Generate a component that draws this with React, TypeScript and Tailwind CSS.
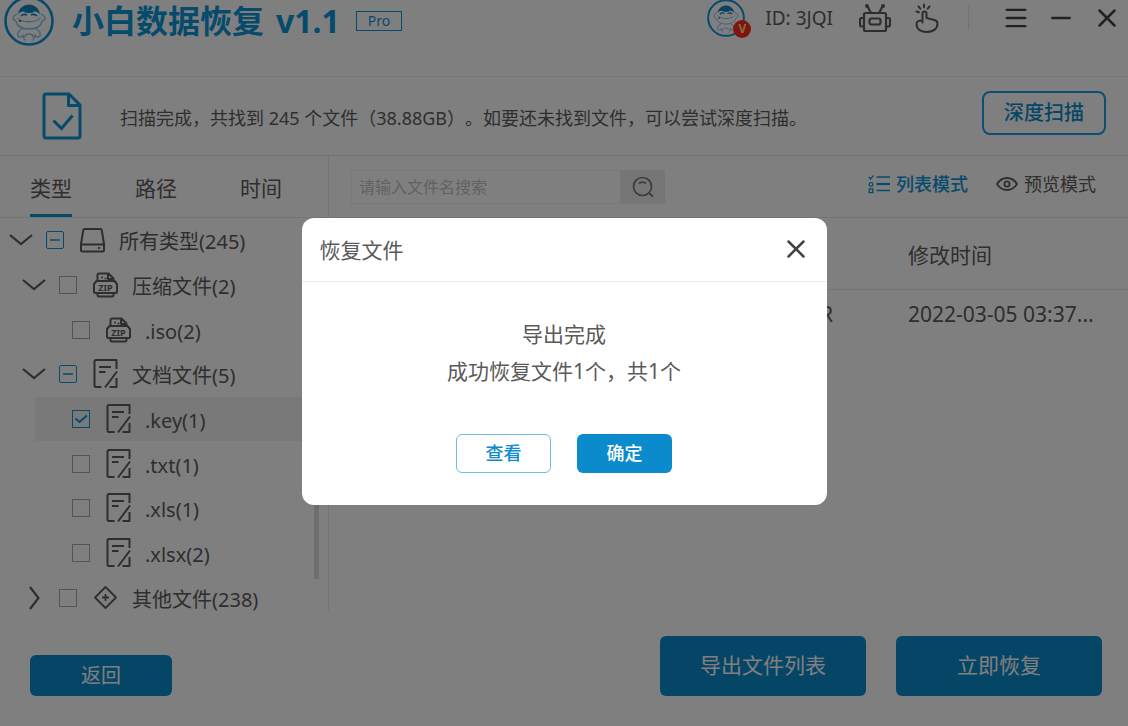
import React, { useState } from 'react';
import { Menu, Minus, X } from 'lucide-react';
import clsx from 'clsx';

type CheckState = 'none' | 'partial' | 'checked';
type IconName = 'drive' | 'zip' | 'doc' | 'other';

interface TreeNode {
    id: string;
    label: string;
    level: 0 | 1 | 2;
    icon: IconName;
    state: CheckState;
    arrow?: 'open' | 'closed';
    selected?: boolean;
}

const TREE: TreeNode[] = [
    { id: 'all', label: '所有类型(245)', level: 0, icon: 'drive', state: 'partial', arrow: 'open' },
    { id: 'archive', label: '压缩文件(2)', level: 1, icon: 'zip', state: 'none', arrow: 'open' },
    { id: 'iso', label: '.iso(2)', level: 2, icon: 'zip', state: 'none' },
    { id: 'docs', label: '文档文件(5)', level: 1, icon: 'doc', state: 'partial', arrow: 'open' },
    { id: 'key', label: '.key(1)', level: 2, icon: 'doc', state: 'checked', selected: true },
    { id: 'txt', label: '.txt(1)', level: 2, icon: 'doc', state: 'none' },
    { id: 'xls', label: '.xls(1)', level: 2, icon: 'doc', state: 'none' },
    { id: 'xlsx', label: '.xlsx(2)', level: 2, icon: 'doc', state: 'none' },
    { id: 'other', label: '其他文件(238)', level: 1, icon: 'other', state: 'none', arrow: 'closed' },
];

const TABS = ['类型', '路径', '时间'];

// Full-width punctuation is escaped so editors don't normalise it
const SCAN_SUMMARY =
    '扫描完成\uFF0C共找到 245 个文件\uFF0838.88GB\uFF09\u3002如要还未找到文件\uFF0C可以尝试深度扫描\u3002';
const RESULT_TEXT = '成功恢复文件1个\uFF0C共1个';

const INDENT = { 0: 'ml-[9px]', 1: 'ml-[22px]', 2: 'ml-[35px]' };

// Round mascot used for both the logo and the account avatar
const Mascot: React.FC<{ className: string }> = ({ className }) => (
    <svg viewBox="0 0 50 50" className={className} fill="none" aria-hidden="true">
        <circle cx="25" cy="25" r="23.5" stroke="#0c96d8" strokeWidth="2.6" />
        <g stroke="#7cc4ea" strokeWidth="1.3" strokeLinecap="round">
            <path d="M13 18c-2 1-4 3-4 4.500s2 2 3 2.500c1 5 6 8 13 8s12-3 13-8c1-.5 3-1 3-2.500S39 19 37 18" />
            <path d="M14 22c3 5 19 5 22 0" />
            <path d="M18 33c-3 1-5 4-4 7 1 2 4 1 5-1M32 33c3 1 5 4 4 7-1 2-4 1-5-1M21 41c0-4 8-4 8 0M19 39c0 3 1 4 2 5M31 39c0 3-1 4-2 5" />
        </g>
        <path d="M14 18c1-6 6-9.500 11-9.500S35 12 36 18c-2-2-4-2.500-6-2.500-1 2-9 2-10 0-2 0-4 .5-6 2.500z" fill="#0c86c8" />
        <path d="M17 20c2-2 4-2 6-1M27 19c2-1 4-1 6 1" stroke="#0c86c8" strokeWidth="1.600" />
        <circle cx="16" cy="25" r=".9" fill="#333" />
    </svg>
);

const RobotIcon = () => (
    <svg viewBox="0 0 32 30" className="h-[30px] w-8" fill="none" stroke="currentColor" strokeWidth="2.2" aria-hidden="true">
        <rect x="5" y="10" width="22" height="18" rx="1.500" />
        <rect x="10.500" y="15.500" width="11" height="6" rx="2" />
        <path d="M12 10 8.500 3.500M20 10l3.500-6.500" />
        <path d="M5 15H2.500Q1 15 1 16.500v5.500q0 1.500 1.500 1.500H5M27 15h2.500Q31 15 31 16.500v5.500q0 1.500-1.500 1.500H27" />
        <circle cx="8" cy="3" r="2" fill="currentColor" stroke="none" />
        <circle cx="24" cy="3" r="2" fill="currentColor" stroke="none" />
    </svg>
);

const TapIcon = () => (
    <svg viewBox="0 0 24 30" className="h-[30px] w-6" fill="none" stroke="currentColor" strokeWidth="2" strokeLinecap="round" strokeLinejoin="round" aria-hidden="true">
        <path d="M7.500 19.500V10.500c0-2.600 4-2.600 4 0V15l8 2c2 .5 3 1.700 3 3.500 0 5-4 8.500-10.500 8.500C5.500 29 1.500 26 1.500 21c0-2.500 2.500-4 6-3.500" />
        <path d="M9 1.500v2.700M3.500 3.500l1.800 2.200M14.500 3.500l-1.800 2.200M1.500 8.500l2.500.7" />
    </svg>
);

const ScanDoneIcon = () => (
    <svg viewBox="0 0 40 48" className="h-12 w-10" fill="none" stroke="#0c96d8" strokeWidth="3" strokeLinejoin="round" aria-hidden="true">
        <path d="M4 2h23l11 11v31q0 2-2 2H4q-2 0-2-2V4q0-2 2-2z" />
        <path d="M26.500 2v11.500H38" />
        <path d="M11.500 28.500l8 8 11-13" strokeLinejoin="miter" />
    </svg>
);

const ListIcon = () => (
    <svg viewBox="0 0 22 20" className="h-5 w-[22px]" fill="none" stroke="currentColor" strokeWidth="1.300" aria-hidden="true">
        <path d="M8.500 3H22M8.500 16.500H22" />
        <path d="M8.500 10H22" strokeWidth="2.200" />
        <path d="M.8 3l1.700 2L5.500 1.500" />
        <circle cx="3" cy="10.500" r="1.800" />
        <rect x="1.200" y="15" width="3.600" height="3.600" />
    </svg>
);

const EyeIcon = () => (
    <svg viewBox="0 0 22 16" className="h-4 w-[22px]" fill="none" stroke="currentColor" strokeWidth="1.800" aria-hidden="true">
        <path d="M1 8c2.500-4 6-6 10-6s7.500 2 10 6c-2.500 4-6 6-10 6S3.500 12 1 8z" />
        <circle cx="11" cy="8" r="2.600" />
    </svg>
);

const SearchIcon = () => (
    <svg viewBox="0 0 22 22" className="h-[22px] w-[22px]" fill="none" stroke="currentColor" strokeWidth="1.700" aria-hidden="true">
        <circle cx="10.500" cy="10.500" r="9" />
        <path d="M17 17l4 3.500M7 7.500c2-1.700 5-1.700 7 0" />
    </svg>
);

const NodeIcon: React.FC<{ name: IconName }> = ({ name }) => (
    <svg viewBox="0 0 25 30" className="h-[30px] w-[25px] shrink-0" fill="none" stroke="currentColor" strokeWidth="2" strokeLinejoin="round" aria-hidden="true">
        {name === 'drive' && (
            <>
                <path d="M4.500 4h16q1 0 1.200 1L24 19v6q0 1.500-1.500 1.500h-20Q1 26.500 1 25v-6L3.300 5q.2-1 1.200-1zM1 19.500h23" />
                <path d="M18 23h2" strokeWidth="2.200" />
            </>
        )}
        {name === 'zip' && (
            <>
                <path d="M4.500 11V5q0-1.500 1.500-1.500h9.500l5 5V11M15 3.500v5.500h5.500" />
                <path d="M3.500 11h18L24 14v7.500q0 1.500-1.500 1.500h-20Q1 23 1 21.500V14z" />
                <path d="M4.500 23v2q0 1.500 1.500 1.500h13q1.500 0 1.500-1.500v-2" />
                <path d="M8 7.500h2M11.500 8.500h2" strokeWidth="1.700" />
                <text x="12.500" y="20.500" textAnchor="middle" fontSize="9" fontWeight="700" fill="currentColor" stroke="none">ZIP</text>
            </>
        )}
        {name === 'doc' && (
            <>
                <path d="M8.500 28H3q-1.500 0-1.500-1.500v-24Q1.500 1 3 1h20.500v9" />
                <path d="M6 8h12M6 13h6.500" strokeWidth="1.800" />
                <path d="M12 28.500 24 12.500M23.500 19v9h-7" />
            </>
        )}
        {name === 'other' && (
            <path d="M12.500 4 23 14.500 12.500 25 2 14.500zM12.500 11v7M9 14.500h7" strokeWidth="1.800" />
        )}
    </svg>
);

const TreeRow: React.FC<{ node: TreeNode }> = ({ node }) => {
    const [state, setState] = useState<CheckState>(node.state);

    return (
        <li className={clsx('flex flex-1 items-center', INDENT[node.level], node.selected && 'bg-[#f2f2f2]')}>
            {node.arrow ? (
                <button type="button" aria-label="展开或收起" className="flex w-6 shrink-0 justify-center">
                    {node.arrow === 'open' ? (
                        <svg viewBox="0 0 24 12" className="h-3 w-6" fill="none" stroke="currentColor" strokeWidth="2.2">
                            <path d="M1 1l11 9L23 1" />
                        </svg>
                    ) : (
                        <svg viewBox="0 0 12 24" className="h-6 w-3" fill="none" stroke="currentColor" strokeWidth="2.2">
                            <path d="M2 1l8.500 11L2 23" />
                        </svg>
                    )}
                </button>
            ) : (
                // Leaf rows have no arrow, keep its space
                <span className="w-6 shrink-0" />
            )}
            <span className="relative ml-[13px] h-[18px] w-[18px] shrink-0">
                <input
                    id={node.id}
                    type="checkbox"
                    checked={state === 'checked'}
                    onChange={() => setState(state === 'checked' ? 'none' : 'checked')}
                    className={clsx(
                        'block h-[18px] w-[18px] appearance-none border',
                        state === 'none' ? 'border-[#a8a8a8]' : 'border-[#0c96d8]',
                        state === 'partial' && 'rounded-xs'
                    )}
                />
                {state !== 'none' && (
                    <svg viewBox="0 0 18 18" className="pointer-events-none absolute inset-0" fill="none" stroke="#0c96d8">
                        {state === 'partial' ? (
                            <path d="M4 9h10" strokeWidth="1.5" />
                        ) : (
                            <path d="M3.500 8.500l4 3.500 7.500-6.500" strokeWidth="2" />
                        )}
                    </svg>
                )}
            </span>
            <label htmlFor={node.id} className="ml-4 flex items-center gap-3.5 text-xl leading-8 whitespace-nowrap">
                <NodeIcon name={node.icon} />
                <span className="pt-1">{node.label}</span>
            </label>
        </li>
    );
};

const TitleBar = () => (
    <header className="flex h-[77px] items-start justify-between border-b border-[#efefef] pr-1.5 pl-1">
        <div className="flex h-[42px] items-center">
            <Mascot className="h-[50px] w-[50px]" />
            <h1 className="ml-[18px] flex gap-3 text-[32px] leading-10 font-bold text-[#0c96d8]">
                <span>小白数据恢复</span>
                <span>v1.1</span>
            </h1>
            <span className="ml-4 w-[46px] border border-[#0c96d8] text-center text-sm leading-[18px] text-[#0c96d8]">Pro</span>
        </div>
        <div className="flex h-9 items-center">
            <div className="relative">
                <Mascot className="h-[38px] w-[38px]" />
                <span className="absolute -right-1.5 -bottom-px flex h-[18px] w-[18px] items-center justify-center rounded-full bg-[#ff2a18] text-xs font-bold text-[#ffd9a0]">V</span>
            </div>
            <span className="ml-5 text-[19px] leading-7">ID: 3JQI</span>
            <button type="button" aria-label="客服" className="ml-[26px]"><RobotIcon /></button>
            <button type="button" aria-label="操作指引" className="ml-6"><TapIcon /></button>
            <span className="ml-[29px] h-6 w-px bg-[#e4e4e4]" />
            <div className="ml-[33px] flex items-center gap-4 text-[#444]">
                <button type="button" aria-label="菜单"><Menu size={28} strokeWidth={2} /></button>
                <button type="button" aria-label="最小化"><Minus size={30} strokeWidth={2} /></button>
                <button type="button" aria-label="关闭"><X size={30} strokeWidth={2} /></button>
            </div>
        </div>
    </header>
);

const Sidebar = () => {
    const [tab, setTab] = useState('类型');

    return (
        <aside className="relative flex w-[328px] shrink-0 flex-col">
            <nav className="flex h-[62px] shrink-0 gap-[63px] border-b border-[#e8e8e8] pl-[30px]">
                {TABS.map((name) => (
                    <button
                        key={name}
                        type="button"
                        onClick={() => setTab(name)}
                        className={clsx('border-b-3 pt-1.5 text-[21px] leading-8', tab === name ? 'border-[#0c96d8]' : 'border-transparent')}
                    >
                        {name}
                    </button>
                ))}
            </nav>
            <ul className="flex flex-1 flex-col">
                {TREE.map((node) => (
                    <TreeRow key={node.id} node={node} />
                ))}
            </ul>
            {/* Scrollbar thumb */}
            <span className="absolute right-[9px] bottom-[41px] h-72 w-[5px] bg-[#dcdcdc]" />
        </aside>
    );
};

const FilePanel = () => (
    <section className="flex min-w-0 flex-1 flex-col">
        <div className="flex h-[62px] items-center justify-between border-b border-[#e8e8e8] pr-8 pl-[22px]">
            <form className="flex" onSubmit={(e) => e.preventDefault()}>
                <input
                    type="text"
                    aria-label="搜索"
                    placeholder="请输入文件名搜索"
                    className="h-[34px] w-[270px] border border-[#f2f2f2] px-[7px] text-base placeholder:text-[#c4c4c4]"
                />
                <button type="submit" aria-label="搜索" className="flex h-[34px] w-11 items-center justify-center bg-[#ececec] text-[#777]">
                    <SearchIcon />
                </button>
            </form>
            <div className="flex gap-7 pb-1.5 text-lg leading-7">
                <button type="button" className="flex items-center gap-1.5 font-medium text-[#0c96d8]"><ListIcon />列表模式</button>
                <button type="button" className="flex items-center gap-1.5"><EyeIcon />预览模式</button>
            </div>
        </div>
        <table className="w-full table-fixed text-left text-[21px] leading-8">
            <thead>
                <tr className="h-[71px] border-b border-[#e8e8e8]">
                    <th />
                    <th className="w-[220px] pt-1 font-normal">修改时间</th>
                </tr>
            </thead>
            <tbody>
                <tr className="h-[50px]">
                    <td className="pr-[75px] text-right">R</td>
                    <td>2022-03-05 03:37...</td>
                </tr>
            </tbody>
        </table>
    </section>
);

const ResultDialog: React.FC<{ onClose: () => void }> = ({ onClose }) => (
    <div className="fixed inset-0 flex items-center justify-center bg-black/50 pb-1">
        <div role="dialog" aria-modal="true" aria-labelledby="dialog-title" className="w-[525px] rounded-xl bg-white text-[21px] text-[#5a5a5a]">
            <div className="flex h-16 items-center justify-between border-b border-[#ececec] pr-4 pl-[18px]">
                <h2 id="dialog-title" className="pt-1">恢复文件</h2>
                <button type="button" aria-label="关闭" onClick={onClose} className="text-[#444]">
                    <X size={30} strokeWidth={2} />
                </button>
            </div>
            <div className="pt-[34px] text-center leading-[37px]">
                <p>导出完成</p>
                <p>{RESULT_TEXT}</p>
            </div>
            <div className="mt-11 flex justify-center gap-[26px] pb-8 text-lg font-medium">
                <button type="button" onClick={onClose} className="h-[39px] w-[95px] rounded-md border border-[#6cbce6] text-[#0b8bcb]">查看</button>
                <button type="button" onClick={onClose} className="h-[39px] w-[95px] rounded-md bg-[#0b8bcb] text-white">确定</button>
            </div>
        </div>
    </div>
);

export default function App() {
    const [showResult, setShowResult] = useState(true);

    return (
        <div className="flex min-h-screen flex-col overflow-hidden bg-white font-['Noto_Sans','Noto_Sans_CJK_SC',sans-serif] text-[#5c5c5c]">
            <TitleBar />
            <div className="flex h-[79px] items-center border-b border-[#e8e8e8] pr-[22px] pl-[42px]">
                <ScanDoneIcon />
                <p className="ml-[38px] flex-1 pt-1 text-lg leading-7 [text-spacing-trim:space-all]">{SCAN_SUMMARY}</p>
                <button type="button" className="mb-1.5 h-11 w-[124px] rounded-lg border-2 border-[#1a9fe0] text-xl font-medium text-[#0b8bcb]">
                    深度扫描
                </button>
            </div>
            <main className="flex flex-1">
                <Sidebar />
                <span className="mb-2.5 w-px bg-[#e8e8e8]" />
                <FilePanel />
            </main>
            <footer className="flex items-end pt-4 pr-[26px] pb-[30px] pl-[30px] text-white">
                <button type="button" className="h-[41px] w-[142px] rounded-md bg-[#0b8bcb] text-xl">返回</button>
                <div className="ml-auto flex gap-[30px] text-[21px]">
                    <button type="button" className="h-[60px] w-[206px] rounded-md bg-[#0b8bcb]">导出文件列表</button>
                    <button type="button" className="h-[60px] w-[206px] rounded-md bg-[#0b8bcb]" onClick={() => setShowResult(true)}>立即恢复</button>
                </div>
            </footer>
            {showResult && <ResultDialog onClose={() => setShowResult(false)} />}
        </div>
    );
}
